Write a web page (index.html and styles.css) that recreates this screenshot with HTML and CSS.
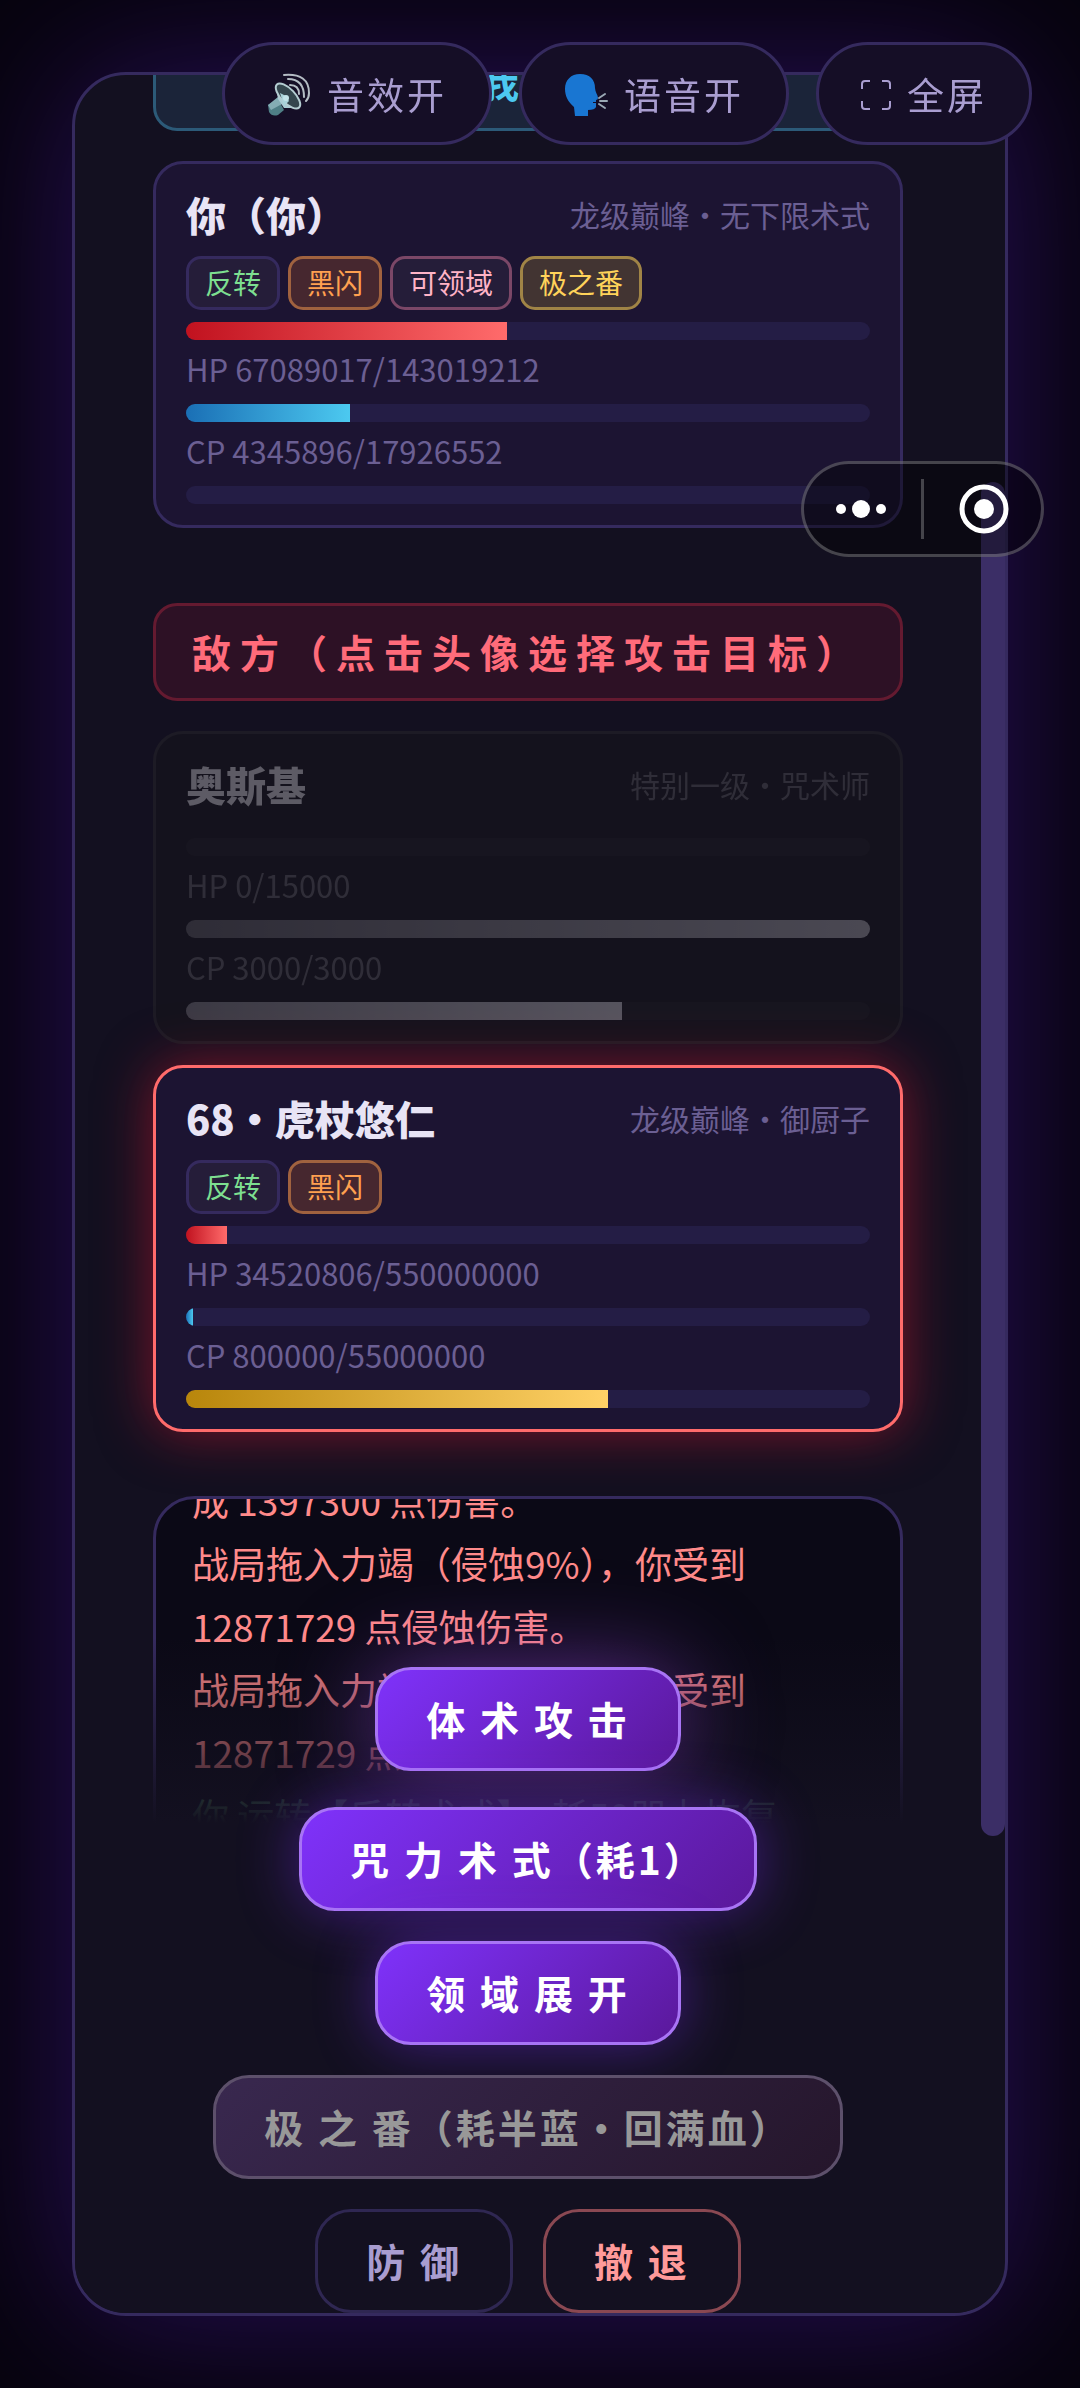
FILE: index.html
```
<!DOCTYPE html>
<html lang="zh-CN">
<head>
    <meta charset="UTF-8">
    <meta name="viewport" content="width=device-width, initial-scale=1.0">
    <title>战斗</title>
    <link rel="stylesheet" href="styles.css">
</head>
<body>
    <div class="toolbar">
        <button class="tool-btn" type="button">
            <svg class="tool-icon" viewBox="0 0 44 44" aria-hidden="true">
                <path d="M1 32 L11 26 L17 37 L11 42 Q5 44 2 39 Z" fill="#4f7f86"/>
                <path d="M1 32 L11 24 L15 31 L4 37 Z" fill="#84adb4"/>
                <path d="M9 14 L11 26 L17 35 L31 35 Z" fill="#a9ccd4"/>
                <ellipse cx="21" cy="23" rx="7" ry="16" transform="rotate(-44 21 23)" fill="#34464e" stroke="#b4cdd2" stroke-width="2"/>
                <path d="M13 20 L19 23 L22 28 L17 33 Z" fill="#a9d3da"/>
                <circle cx="19" cy="25" r="3" fill="#c3e4ea"/>
                <path d="M23 12 Q32 12 32 21 M21 6 Q37 6 37 24 M17 2 Q42 0 42 20 Q42 25 39 28" fill="none" stroke="#b4bcc4" stroke-width="2" stroke-linecap="round"/>
            </svg>
            <span>音效开</span>
        </button>
        <button class="tool-btn" type="button">
            <svg class="tool-icon" viewBox="0 0 44 44" aria-hidden="true">
                <path d="M16 1 C26 1 31 7 31 15 C31 19 34 22 34 25 Q34 27 32 27 V29 H29 V30 H32 V34 Q31 37 24 37 L24 43 H11 L10 34 C4 29 1 23 1 16 C1 7 7 1 16 1 Z" fill="#1976d2"/>
                <path d="M35 25 L41 21 M36 28 H43 M35 31 L41 35" fill="none" stroke="#9aa8b4" stroke-width="2" stroke-linecap="round"/>
            </svg>
            <span>语音开</span>
        </button>
        <button class="tool-btn" type="button">
            <svg class="tool-icon tool-icon-small" viewBox="0 0 30 30" aria-hidden="true">
                <path d="M1 9 V4 Q1 1 4 1 H9 M21 1 H26 Q29 1 29 4 V9 M29 21 V26 Q29 29 26 29 H21 M9 29 H4 Q1 29 1 26 V21" fill="none" stroke="#a99dd0" stroke-width="2"/>
            </svg>
            <span>全屏</span>
        </button>
    </div>

    <div class="capsule">
        <button class="capsule-btn" type="button" aria-label="更多">
            <svg viewBox="0 0 50 50" width="50" height="50">
                <circle cx="5" cy="25" r="5" fill="#fff"/>
                <circle cx="25" cy="25" r="9" fill="#fff"/>
                <circle cx="45" cy="25" r="5" fill="#fff"/>
            </svg>
        </button>
        <span class="capsule-line"></span>
        <button class="capsule-btn" type="button" aria-label="关闭">
            <svg viewBox="0 0 50 50" width="50" height="50">
                <circle cx="25" cy="25" r="22" fill="none" stroke="#fff" stroke-width="5"/>
                <circle cx="25" cy="25" r="10" fill="#fff"/>
            </svg>
        </button>
    </div>

    <main class="panel">
        <div class="battle">
            <div class="battle-body">
                <h2 class="banner banner-ally">我方</h2>
                <section class="card">
                    <div class="card-head">
                        <span class="name">你（你）</span>
                        <span class="rank">龙级巅峰・无下限术式</span>
                    </div>
                    <div class="tags">
                        <span class="tag tag-green">反转</span>
                        <span class="tag tag-orange">黑闪</span>
                        <span class="tag tag-pink">可领域</span>
                        <span class="tag tag-gold">极之番</span>
                    </div>
                    <div class="bar"><div class="fill fill-hp" style="width: 47%"></div></div>
                    <p class="stat">HP 67089017/143019212</p>
                    <div class="bar"><div class="fill fill-cp" style="width: 24%"></div></div>
                    <p class="stat">CP 4345896/17926552</p>
                    <div class="bar"></div>
                </section>

                <h2 class="banner banner-enemy">敌方（点击头像选择攻击目标）</h2>
                <section class="card card-dead">
                    <div class="card-head">
                        <span class="name">奥斯基</span>
                        <span class="rank">特别一级・咒术师</span>
                    </div>
                    <div class="tags"></div>
                    <div class="bar"></div>
                    <p class="stat">HP 0/15000</p>
                    <div class="bar"><div class="fill fill-cp" style="width: 100%"></div></div>
                    <p class="stat">CP 3000/3000</p>
                    <div class="bar"><div class="fill fill-gold" style="width: 63.7%"></div></div>
                </section>
                <section class="card card-target">
                    <div class="card-head">
                        <span class="name">68・虎杖悠仁</span>
                        <span class="rank">龙级巅峰・御厨子</span>
                    </div>
                    <div class="tags">
                        <span class="tag tag-green">反转</span>
                        <span class="tag tag-orange">黑闪</span>
                    </div>
                    <div class="bar"><div class="fill fill-hp" style="width: 6%"></div></div>
                    <p class="stat">HP 34520806/550000000</p>
                    <div class="bar"><div class="fill fill-cp" style="width: 1%"></div></div>
                    <p class="stat">CP 800000/55000000</p>
                    <div class="bar"><div class="fill fill-gold" style="width: 61.7%"></div></div>
                </section>

                <div class="log">
                    <div class="log-lines">
                        <p>成 1397300 点伤害。</p>
                        <p>战局拖入力竭（侵蚀9%），你受到 12871729 点侵蚀伤害。</p>
                        <p>战局拖入力竭（侵蚀9%），你受到 12871729 点侵蚀伤害。</p>
                        <p class="log-heal">你 运转【反转术式】，耗50咒力恢复</p>
                    </div>
                </div>
            </div>

            <div class="actions">
                <div class="action-row action-row-first">
                    <button class="btn btn-primary" type="button">体 术 攻 击</button>
                </div>
                <div class="action-row">
                    <button class="btn btn-primary" type="button">咒 力 术 式（耗1）</button>
                </div>
                <div class="action-row">
                    <button class="btn btn-primary" type="button">领 域 展 开</button>
                </div>
                <div class="action-row">
                    <button class="btn btn-primary" type="button" disabled>极 之 番（耗半蓝・回满血）</button>
                </div>
                <div class="action-row">
                    <button class="btn btn-ghost" type="button">防 御</button>
                    <button class="btn btn-danger" type="button">撤 退</button>
                </div>
            </div>
        </div>
        <div class="rail"><div class="thumb"></div></div>
    </main>
</body>
</html>
```
FILE: styles.css
```
* {
    box-sizing: border-box;
}
body {
    margin: 0;
    padding: 72px;
    height: 100vh;
    overflow: hidden;
    background: #07040e;
    color: #e8e4f5;
    font-family: "Noto Sans CJK SC", sans-serif;
}
h2, p {
    margin: 0;
}
button {
    font-family: inherit;
    cursor: pointer;
}

/* floating controls */
.toolbar {
    position: fixed;
    top: 42px;
    right: 48px;
    z-index: 10;
    display: flex;
    gap: 27px;
}
.tool-btn {
    display: flex;
    align-items: center;
    gap: 16px;
    padding: 22px 42px 20px;
    border: 3px solid #352a5e;
    border-radius: 52px;
    background: #150e26;
    color: #a99dd0;
    font-size: 37px;
    line-height: 55px;
    letter-spacing: 3px;
}
.tool-icon {
    width: 44px;
    height: 44px;
}
.tool-icon-small {
    width: 30px;
    height: 30px;
}
.capsule {
    position: fixed;
    top: 461px;
    right: 36px;
    z-index: 10;
    display: flex;
    align-items: center;
    gap: 35px;
    height: 96px;
    padding: 0 32px;
    border: 3px solid rgba(255, 255, 255, 0.24);
    border-radius: 48px;
    background: rgba(0, 0, 0, 0.4);
}
.capsule-btn {
    display: flex;
    padding: 0;
    border: 0;
    background: none;
}
.capsule-line {
    width: 3px;
    height: 60px;
    background: rgba(255, 255, 255, 0.24);
}

/* panel */
.panel {
    display: flex;
    height: 100%;
    border: 3px solid #352a5e;
    border-radius: 54px;
    background: #131020;
    box-shadow: 0 0 150px rgba(90, 30, 200, 0.4);
    overflow: hidden;
}
.battle {
    position: relative;
    flex: 1;
    padding: 0 78px;
}
.battle-body {
    margin-top: -42px;
}
.rail {
    width: 24px;
}
.thumb {
    position: relative;
    top: 18.2%;
    height: 60.5%;
    border-radius: 12px;
    background: #3b2e66;
}

.banner {
    padding: 17px 12px 19px;
    border: 3px solid;
    border-radius: 24px;
    font-size: 39px;
    line-height: 56px;
    letter-spacing: 9px;
    font-weight: 700;
    text-align: center;
}
.banner-ally {
    color: #4cc9f0;
    border-color: #2c5a78;
    background: #1b2439;
}
.banner-enemy {
    margin-top: 75px;
    color: #ff6b7a;
    border-color: #641a30;
    background: #2d1125;
}

/* fighters */
.card {
    margin-top: 30px;
    padding: 21px 30px;
    border: 3px solid #352a5e;
    border-radius: 30px;
    background: #1c1432;
}
.card-head {
    display: flex;
    justify-content: space-between;
    align-items: center;
}
.name {
    font-size: 40px;
    line-height: 58px;
    font-weight: 900;
}
.rank {
    color: #6b5f93;
    font-size: 30px;
}
.tags {
    display: flex;
    gap: 8px;
    margin-top: 13px;
}
.tag {
    padding: 2px 16px 4px;
    border: 3px solid #352a5e;
    border-radius: 15px;
    background: #251d39;
    font-size: 28px;
    line-height: 42px;
}
.tag-green {
    color: #7ddf90;
}
.tag-orange {
    color: #ffa050;
    border-color: #a0623f;
    background: #46272f;
}
.tag-pink {
    color: #ffb3c6;
    border-color: #7b4767;
}
.tag-gold {
    color: #ffd35a;
    border-color: #a08446;
    background: #423432;
}
.bar {
    height: 18px;
    margin-top: 12px;
    border-radius: 9px;
    background: #241d45;
    overflow: hidden;
}
.fill {
    height: 100%;
}
.fill-hp {
    background: linear-gradient(90deg, #c1121f, #ff6b6b);
}
.fill-cp {
    background: linear-gradient(90deg, #1a6fb5, #4cc9f0);
}
.fill-gold {
    background: linear-gradient(90deg, #b8860b, #ffd166);
}
.stat {
    margin-top: 6px;
    color: #6b5f93;
    font-size: 31px;
    line-height: 46px;
}
.card-dead {
    opacity: 0.35;
    filter: grayscale(1);
}
.card-target {
    margin-top: 21px;
    border-color: #ff6b6b;
    box-shadow: 0 0 54px rgba(230, 25, 50, 0.5);
}

/* battle log */
.log {
    height: 420px;
    margin-top: 64px;
    padding: 0 36px;
    border: 3px solid #352a5e;
    border-radius: 42px;
    background: #0b0916;
    overflow: hidden;
}
.log-lines {
    margin-top: -30px;
    color: #ff8a8a;
    font-size: 37px;
    line-height: 63px;
}
.log-heal {
    color: #7ddf90;
}

/* action area stays over the end of the log */
.actions {
    position: absolute;
    left: 0;
    right: 0;
    bottom: 0;
    display: flex;
    flex-direction: column;
    gap: 30px;
    padding-top: 60px;
    background: linear-gradient(rgba(19, 16, 32, 0) 30px, #131020 216px);
}
.action-row {
    display: flex;
    justify-content: center;
    gap: 30px;
}
.action-row-first {
    margin-bottom: 6px;
}
.btn {
    padding: 20px 48px 22px;
    border: 3px solid;
    border-radius: 36px;
    background: none;
    font-size: 39px;
    line-height: 56px;
    font-weight: 700;
    letter-spacing: 3px;
}
.btn-primary {
    color: #fff;
    border-color: #a874f5;
    background: linear-gradient(135deg, #7f32fb, #5a189a);
    box-shadow: 0 0 60px rgba(123, 47, 247, 0.45);
}
.action-row-first .btn-primary {
    box-shadow: 0 0 90px rgba(150, 70, 220, 0.55);
}
.btn-primary:disabled {
    color: #989898;
    border-color: #5d506b;
    background: linear-gradient(135deg, #39284f, #25162b);
    box-shadow: none;
}
.btn-ghost {
    color: #a99dd0;
    border-color: #2f2752;
}
.btn-danger {
    color: #ff9a9a;
    border-color: #8a4852;
}
```
